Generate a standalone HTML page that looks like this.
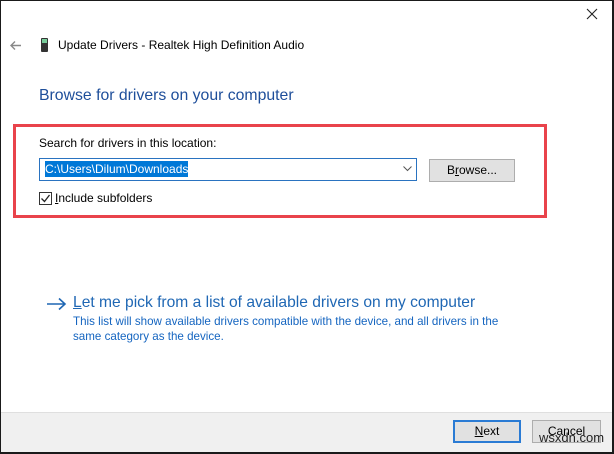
<!DOCTYPE html>
<html><head><meta charset="utf-8"><style>
*{margin:0;padding:0;box-sizing:border-box}
body{width:614px;height:454px;background:#fff;font-family:"Segoe UI","Liberation Sans",sans-serif;position:relative;overflow:hidden;color:#000}
.win{position:absolute;left:0;top:0;width:614px;height:454px;border:1px solid #1a1a1a;border-right-width:2px;border-bottom-width:2px}
.abs{position:absolute;white-space:nowrap}
.footer{position:absolute;left:1px;top:412px;width:611px;height:40px;background:#f0f0f0;border-top:1px solid #dfdfdf}
.btn{position:absolute;height:23px;background:#e1e1e1;border:1px solid #adadad;font-size:12px;text-align:center;line-height:21px}
</style></head><body>
<div class="win"></div>
<svg class="abs" style="left:586px;top:8px" width="12" height="12"><path d="M1 1L11 11M11 1L1 11" stroke="#222" stroke-width="1.1" fill="none"/></svg>
<svg class="abs" style="left:9px;top:40px" width="13" height="11"><path d="M12 5.5H2M6 1.5L2 5.5L6 9.5" stroke="#888" stroke-width="1.4" fill="none"/></svg>
<div class="abs" style="left:41px;top:38px;width:7px;height:14px;background:#333;border-radius:1px"></div>
<div class="abs" style="left:42px;top:39px;width:5px;height:4px;background:#7c9"></div>
<div class="abs" style="left:58px;top:37px;font-size:12px;line-height:16px">Update Drivers - Realtek High Definition Audio</div>
<div class="abs" style="left:39px;top:86px;font-size:15.8px;color:#1e4e9a;line-height:20px">Browse for drivers on your computer</div>
<div class="abs" style="left:13px;top:124px;width:534px;height:94px;border:3px solid #e9434b"></div>
<div class="abs" style="left:39px;top:135px;font-size:12px;line-height:16px">Search for drivers in this location:</div>
<div class="abs" style="left:39px;top:158px;width:378px;height:23px;border:1px solid #2a73c0;background:#fff"></div>
<div class="abs" style="left:45px;top:161px;font-size:12px;line-height:16px;background:#0078d7;color:#fff">C:\Users\Dilum\Downloads</div>
<svg class="abs" style="left:403px;top:166px" width="9" height="6"><path d="M0.5 0.5L4.5 4.5L8.5 0.5" stroke="#555" fill="none"/></svg>
<div class="btn" style="left:429px;top:159px;width:86px">B<u>r</u>owse...</div>
<div class="abs" style="left:39px;top:192px;width:13px;height:13px;border:1px solid #333;background:#fff"></div>
<svg class="abs" style="left:40px;top:193px" width="11" height="11"><path d="M1.5 5.5L4.5 8.5L9.5 2" stroke="#222" stroke-width="1.3" fill="none"/></svg>
<div class="abs" style="left:55px;top:190px;font-size:12px;line-height:16px"><u>I</u>nclude subfolders</div>
<svg class="abs" style="left:46px;top:297px" width="21" height="14"><path d="M1 7H19M13 1.5L19 7L13 12.5" stroke="#1f67b4" stroke-width="1.6" fill="none"/></svg>
<div class="abs" style="left:73px;top:293px;font-size:15.6px;color:#1f67b4;line-height:20px"><u>L</u>et me pick from a list of available drivers on my computer</div>
<div class="abs" style="left:73px;top:314px;font-size:11.6px;color:#1565c0;line-height:15px">This list will show available drivers compatible with the device, and all drivers in the<br>same category as the device.</div>
<div class="footer"></div>
<div class="btn" style="left:453px;top:420px;width:68px;border:2px solid #2a7bd4;line-height:19px"><u>N</u>ext</div>
<div class="btn" style="left:532px;top:420px;width:69px">Cancel</div>
<div class="abs" style="left:539px;top:431px;font-size:13px;color:#222;line-height:14px">wsxdn.com</div>
</body></html>
